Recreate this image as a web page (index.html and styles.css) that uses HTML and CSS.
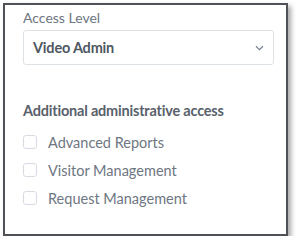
FILE: index.html
```html
<!DOCTYPE html>
<html lang="en">
<head>
    <meta charset="UTF-8">
    <title>Access Level</title>
    <link rel="stylesheet" href="styles.css">
</head>
<body>
    <div class="card">
        <label class="field-label">Access Level</label>
        <div class="select">
            <span class="select-value">Video Admin</span>
            <svg class="chevron" width="9" height="6" viewBox="0 0 9 6">
                <path d="M1 1.2 L4.5 4.6 L8 1.2" fill="none" stroke="#7a8491" stroke-width="1.3"/>
            </svg>
        </div>
        <h4 class="section-title">Additional administrative access</h4>
        <ul class="check-list">
            <li><span class="box"></span>Advanced Reports</li>
            <li><span class="box"></span>Visitor Management</li>
            <li><span class="box"></span>Request Management</li>
        </ul>
    </div>
</body>
</html>
```

FILE: styles.css
```css
body {
    margin: 0;
    background: #fff;
    font-family: Lato, sans-serif;
}

.card {
    margin: 3px 0 0 3px;
    width: 285px;
    height: 233px;
    box-sizing: border-box;
    border: 2px solid #4e5257;
    box-shadow: 3px 3px 5px rgba(0, 0, 0, 0.35);
    padding: 4px 12px 0 18px;
}

.field-label {
    display: block;
    font-size: 14px;
    color: #6d7682;
    line-height: 18px;
}

.select {
    margin-top: 3px;
    height: 35px;
    box-sizing: border-box;
    border: 1px solid #dde2e7;
    border-radius: 3px;
    display: flex;
    align-items: center;
    justify-content: space-between;
    padding: 0 9px 0 9px;
}

.select-value {
    font-size: 14.5px;
    font-weight: bold;
    letter-spacing: -0.2px;
    color: #4f5862;
}

.section-title {
    margin: 37px 0 0 0;
    font-size: 14.5px;
    font-weight: bold;
    letter-spacing: -0.2px;
    color: #59616b;
    line-height: 18px;
}

.check-list {
    list-style: none;
    margin: 8px 0 0 0;
    padding: 0;
}

.check-list li {
    display: flex;
    align-items: center;
    height: 28px;
    font-size: 14.5px;
    color: #6d7682;
}

.box {
    width: 14px;
    height: 14px;
    box-sizing: border-box;
    border: 1px solid #d6dce2;
    border-radius: 3px;
    margin-right: 11px;
}
```
